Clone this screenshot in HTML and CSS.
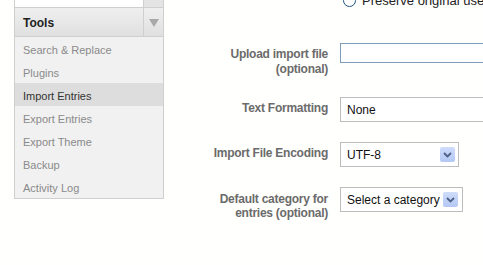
FILE: index.html
```html
<!DOCTYPE html>
<html>
<head>
    <title>Import</title>
    <link rel="stylesheet" href="styles.css">
</head>
<body>
<div class="page">

    <div class="sidebar">
        <div class="prevPanel">
            <div class="prevBody"></div>
            <div class="prevToggle"></div>
        </div>
        <div class="panelHead">
            <div class="panelTitle">Tools</div>
            <div class="panelToggle"><span class="tri"></span></div>
        </div>
        <ul class="menu">
            <li>Search &amp; Replace</li>
            <li>Plugins</li>
            <li class="active">Import Entries</li>
            <li>Export Entries</li>
            <li>Export Theme</li>
            <li>Backup</li>
            <li>Activity Log</li>
        </ul>
    </div>

    <div class="content">
        <div class="radioRow">
            <span class="radio"></span>
            <span class="radioText">Preserve original user</span>
        </div>

        <div class="field fieldUpload">
            <label class="fieldLabel">Upload import file<br>(optional)</label>
            <div class="fieldInput"><div class="textInput"></div></div>
        </div>

        <div class="field fieldFormat">
            <label class="fieldLabel">Text Formatting</label>
            <div class="fieldInput"><div class="selectBox wide">None</div></div>
        </div>

        <div class="field">
            <label class="fieldLabel">Import File Encoding</label>
            <div class="fieldInput">
                <div class="selectBox encoding">
                    <span class="selText">UTF-8</span>
                    <span class="dropBtn"><svg width="9" height="6" viewBox="0 0 9 6"><path d="M1 1 L4.5 4.5 L8 1" fill="none" stroke="#4d6185" stroke-width="1.8"/></svg></span>
                </div>
            </div>
        </div>

        <div class="field fieldCategory">
            <label class="fieldLabel">Default category for<br>entries (optional)</label>
            <div class="fieldInput">
                <div class="selectBox category">
                    <span class="selText">Select a category</span>
                    <span class="dropBtn"><svg width="9" height="6" viewBox="0 0 9 6"><path d="M1 1 L4.5 4.5 L8 1" fill="none" stroke="#4d6185" stroke-width="1.8"/></svg></span>
                </div>
            </div>
        </div>
    </div>

</div>
</body>
</html>
```

FILE: styles.css
```css
body {
	margin: 0;
	background-color: #fffffd;
	font-family: "Liberation Sans", Arial, sans-serif;
	overflow: hidden;
}

.page {
	display: flex;
	align-items: flex-start;
	width: 483px;
	overflow: hidden;
}

/* left tools panel */
.sidebar {
	flex: 0 0 150px;
	width: 150px;
	margin-left: 14px;
	box-sizing: border-box;
}

.prevPanel {
	display: flex;
	height: 7px;
	border: 1px solid #cfcfcf;
	border-top: none;
}

.prevBody {
	flex: 1;
	background-color: #ffffff;
}

.prevToggle {
	width: 19px;
	background-color: #e4e4e4;
	border-left: 1px solid #cfcfcf;
}

.panelHead {
	display: flex;
	height: 28px;
	border: 1px solid #cfcfcf;
	border-top: none;
	background: linear-gradient(#efefef, #e0e0e0);
}

.panelTitle {
	flex: 1;
	padding: 1px 0 0 8px;
	line-height: 28px;
	font-size: 12px;
	font-weight: bold;
	color: #222222;
}

.panelToggle {
	width: 19px;
	border-left: 1px solid #cfcfcf;
	display: flex;
	align-items: center;
	justify-content: center;
}

.tri {
	width: 0;
	height: 0;
	border-left: 5px solid transparent;
	border-right: 5px solid transparent;
	border-top: 8px solid #a9a9a9;
	margin-top: 2px;
}

.menu {
	list-style: none;
	margin: 0;
	padding: 0;
	background-color: #f1f1f1;
	border: 1px solid #cfcfcf;
	border-top: none;
}

.menu li {
	box-sizing: border-box;
	height: 23px;
	padding: 3px 0 0 8px;
	line-height: 20px;
	font-size: 11px;
	color: #8a8a8a;
	white-space: nowrap;
}

.menu li.active {
	background-color: #dddddd;
	color: #333333;
}

/* right form */
.content {
	flex: 1;
	min-width: 0;
	margin-top: -8px;
	overflow: hidden;
}

.radioRow {
	display: flex;
	align-items: center;
	margin-left: 179px;
	height: 17px;
	margin-bottom: 34px;
}

.radio {
	flex: 0 0 auto;
	width: 11px;
	height: 11px;
	border: 1px solid #1c5180;
	border-radius: 50%;
	background-color: #ffffff;
}

.radioText {
	margin-left: 6px;
	font-size: 13px;
	color: #222222;
	white-space: nowrap;
}

.field {
	display: grid;
	grid-template-columns: 164px 1fr;
	column-gap: 12px;
	height: 45px;
}

.fieldUpload {
	height: 54px;
}

.fieldLabel {
	text-align: right;
	font-size: 12px;
	letter-spacing: -0.25px;
	font-weight: bold;
	color: #6b6b6b;
	line-height: 15px;
	padding-top: 4px;
}

.fieldFormat .fieldLabel {
	padding-top: 4px;
}

.fieldCategory .fieldLabel {
	padding-top: 5px;
	line-height: 14px;
}

.fieldInput {
	display: flex;
	align-items: flex-start;
	min-width: 0;
}

.textInput {
	width: 300px;
	height: 18px;
	border: 1px solid #7f9db9;
	background-color: #ffffff;
	flex-shrink: 0;
}

.selectBox {
	display: flex;
	align-items: center;
	box-sizing: border-box;
	height: 25px;
	padding-left: 6px;
	border: 1px solid #bdbdbd;
	background-color: #ffffff;
	font-size: 12px;
	color: #111111;
	white-space: nowrap;
	flex-shrink: 0;
}

.selectBox.wide {
	width: 300px;
}

.selectBox.encoding {
	width: 119px;
	justify-content: space-between;
	padding-right: 3px;
}

.selectBox.category {
	width: 123px;
	padding-right: 3px;
}

.category .dropBtn {
	margin-left: 3px;
}

.dropBtn {
	flex: 0 0 auto;
	width: 15px;
	height: 15px;
	display: flex;
	align-items: center;
	justify-content: center;
	background: linear-gradient(#cfdcfb, #b3c8f4);
	border-radius: 2px;
}
```
